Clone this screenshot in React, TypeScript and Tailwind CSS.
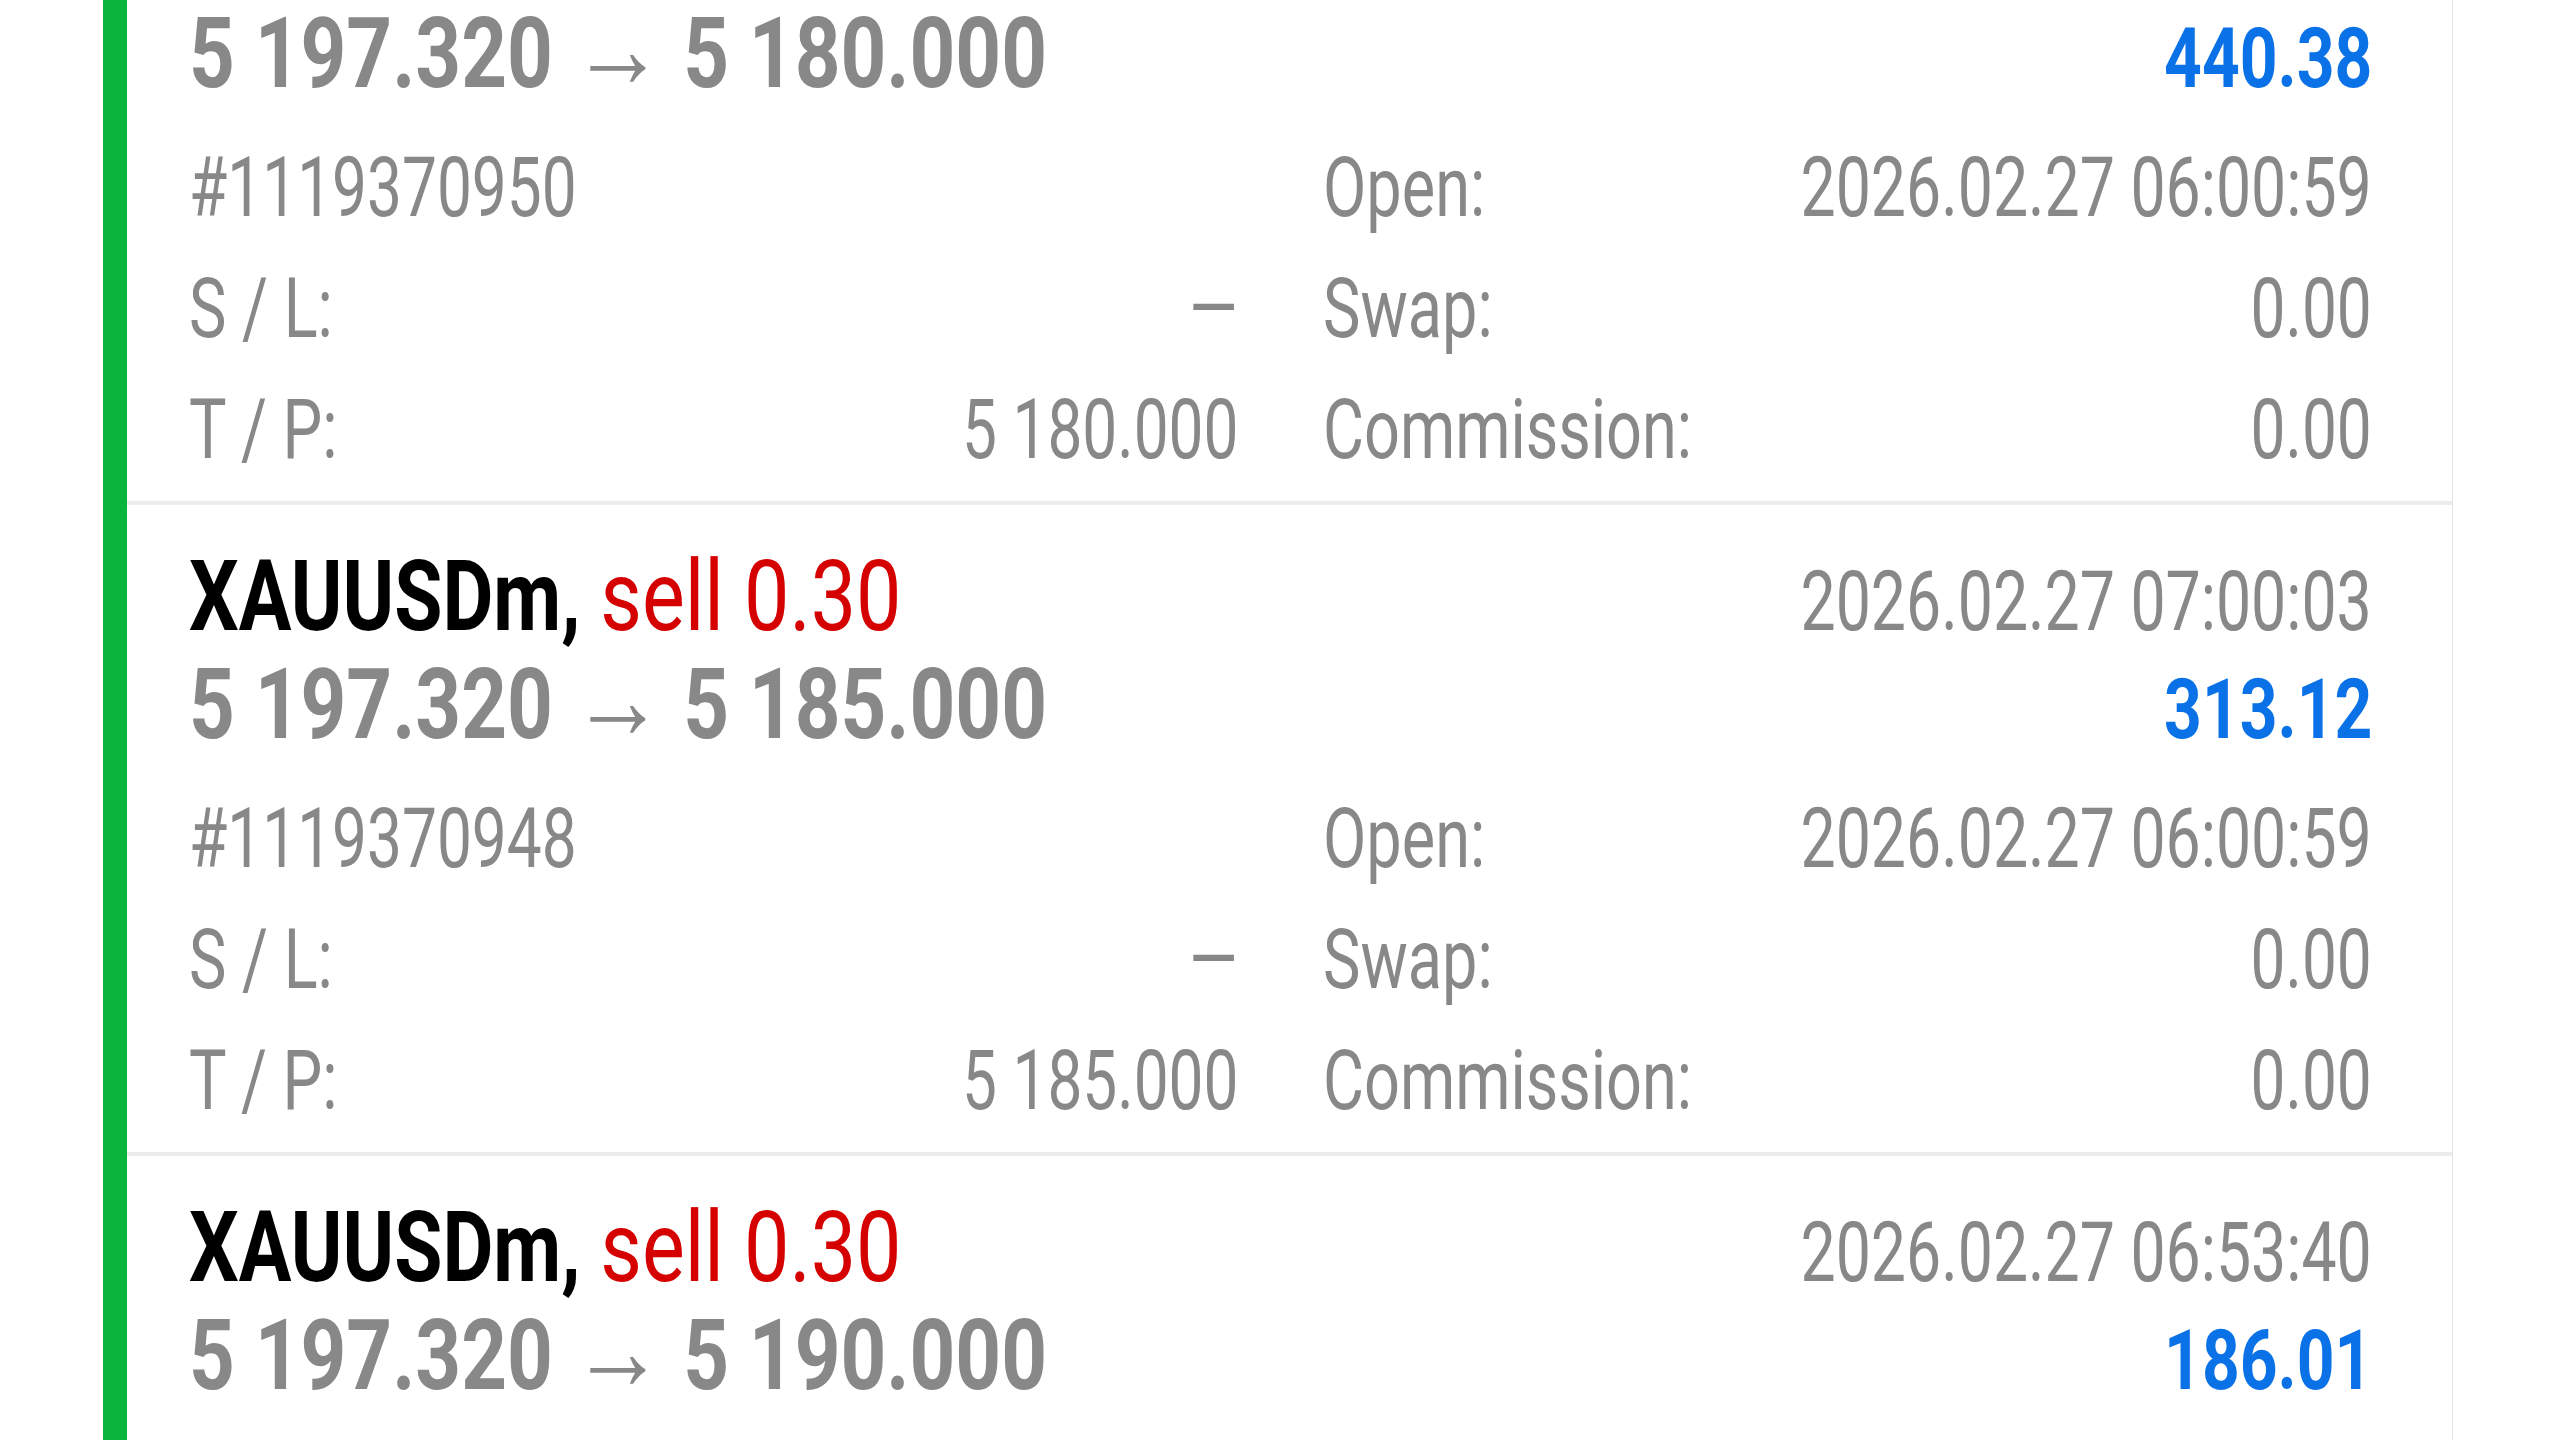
import React from 'react';

type Trade = {
  id: string;
  symbol: string;
  side: string;
  time: string;
  from: string;
  to: string;
  profit: string;
  open: string;
  sl: string;
  tp: string;
  swap: string;
  commission: string;
};

const trades: Trade[] = [
  {
    id: '1119370950',
    symbol: 'XAUUSDm,',
    side: 'sell 0.30',
    time: '2026.02.27 07:00:05',
    from: '5 197.320',
    to: '5 180.000',
    profit: '440.38',
    open: '2026.02.27 06:00:59',
    sl: '—',
    tp: '5 180.000',
    swap: '0.00',
    commission: '0.00',
  },
  {
    id: '1119370948',
    symbol: 'XAUUSDm,',
    side: 'sell 0.30',
    time: '2026.02.27 07:00:03',
    from: '5 197.320',
    to: '5 185.000',
    profit: '313.12',
    open: '2026.02.27 06:00:59',
    sl: '—',
    tp: '5 185.000',
    swap: '0.00',
    commission: '0.00',
  },
  {
    id: '1119370946',
    symbol: 'XAUUSDm,',
    side: 'sell 0.30',
    time: '2026.02.27 06:53:40',
    from: '5 197.320',
    to: '5 190.000',
    profit: '186.01',
    open: '2026.02.27 06:00:59',
    sl: '—',
    tp: '5 190.000',
    swap: '0.00',
    commission: '0.00',
  },
];

// condensed look: Roboto squeezed horizontally
function Left({ children, className = '' }: { children: React.ReactNode; className?: string }) {
  return <span className={`inline-block whitespace-nowrap origin-left shrink-0 ${className}`}>{children}</span>;
}

function Right({ children, className = '' }: { children: React.ReactNode; className?: string }) {
  return (
    <span className="flex-1 min-w-0 flex justify-end">
      <span className={`inline-block whitespace-nowrap origin-right shrink-0 ${className}`}>{children}</span>
    </span>
  );
}

function Detail({ label, value }: { label: string; value: string }) {
  return (
    <div className="flex items-baseline">
      <Left className="scale-x-[0.75]">{label}</Left>
      <Right className="scale-x-[0.74]">{value}</Right>
    </div>
  );
}

function TradeRow({ t }: { t: Trade }) {
  return (
    <div>
      <div className="pt-[40px] pb-[11px] pl-[62px] pr-[80px]">
        <div className="flex items-baseline leading-[103px]">
          <Left className="text-[98px] font-bold text-black scale-x-[0.8]">
            {t.symbol} <span className="font-normal text-[#d50000] inline-block scale-x-[1.03] origin-left">{t.side}</span>
          </Left>
          <Right className="text-[84px] text-[#888888] scale-x-[0.745]">{t.time}</Right>
        </div>
        <div className="flex items-baseline leading-[103px]">
          <Left className="text-[98px] font-bold text-[#888888] scale-x-[0.815]">
            {t.from}
            <span className="text-[114px] leading-[60px] font-normal mx-[23px]">→</span>
            {t.to}
          </Left>
          <Right className="text-[84px] font-bold text-[#0a72e6] scale-x-[0.785]">{t.profit}</Right>
        </div>
        <div className="mt-[17px] grid grid-cols-2 gap-x-[85px] leading-[121px] text-[84px] text-[#888888]">
          <div className="flex items-baseline">
            <Left className="scale-x-[0.74]">#{t.id}</Left>
          </div>
          <div className="flex items-baseline">
            <Left className="scale-x-[0.75]">Open:</Left>
            <Right className="scale-x-[0.745]">{t.open}</Right>
          </div>
          <Detail label="S / L:" value={t.sl} />
          <Detail label="Swap:" value={t.swap} />
          <Detail label="T / P:" value={t.tp} />
          <Detail label="Commission:" value={t.commission} />
        </div>
      </div>
      <div className="h-[4px] bg-[#ececec]" />
    </div>
  );
}

export default function App() {
  return (
    <div className="h-screen w-full overflow-hidden bg-white font-['Roboto',sans-serif] flex">
      <div className="w-[103px] shrink-0" />
      <div className="w-[24px] shrink-0 bg-[#0bb53b]" />
      <div className="w-[2326px] shrink-0 border-r border-[#e3e3e3] overflow-hidden">
        <div className="-mt-[146px]">
          {trades.map(t => (
            <TradeRow key={t.id} t={t} />
          ))}
        </div>
      </div>
    </div>
  );
}
